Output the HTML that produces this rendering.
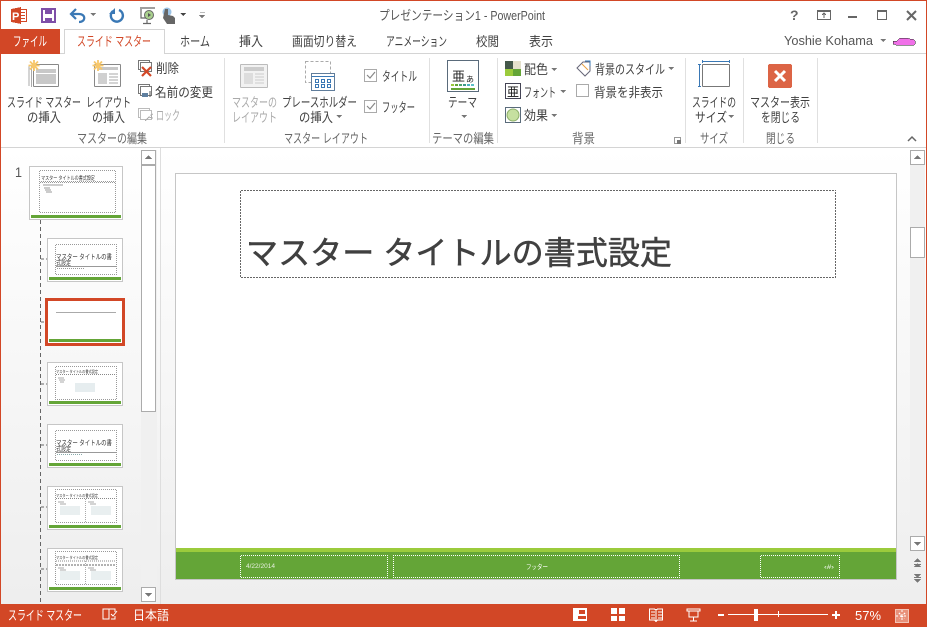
<!DOCTYPE html>
<html lang="ja"><head><meta charset="utf-8"><title>PowerPoint</title>
<style>
html,body{margin:0;padding:0;width:927px;height:627px;overflow:hidden;background:#fff}
svg{display:block}
text{font-family:"Liberation Sans","Noto Sans CJK JP",sans-serif;font-size:13px;fill:#404040;transform:translateY(-1px)}
.w{fill:#fff}.g{fill:#aaa}.lat{font-size:13px;fill:#555;transform:none}
.x{transform:none}
.t{font-size:7px;fill:#333;transform:none}.s{font-size:4px;fill:#555;transform:none}
</style></head><body>
<svg width="927" height="627" viewBox="0 0 927 627" xmlns="http://www.w3.org/2000/svg" shape-rendering="crispEdges">
<defs>
<linearGradient id="bg" x1="0" y1="0" x2="0" y2="1"><stop offset="0" stop-color="#fff"/><stop offset="1" stop-color="#eee"/></linearGradient>
<pattern id="dw" x="0" y="0" width="2" height="2" patternUnits="userSpaceOnUse"><rect x="0" y="0" width="1" height="1" fill="#fff"/><rect x="1" y="1" width="1" height="1" fill="#fff"/></pattern>
<pattern id="dg" x="0" y="0" width="2" height="2" patternUnits="userSpaceOnUse"><rect x="0" y="0" width="1" height="1" fill="#999"/><rect x="1" y="1" width="1" height="1" fill="#999"/></pattern>
<pattern id="dt" x="0" y="0" width="3" height="3" patternUnits="userSpaceOnUse"><rect x="0" y="0" width="2" height="1" fill="#666"/><rect x="1" y="1" width="2" height="1" fill="#666"/><rect x="2" y="2" width="1" height="1" fill="#666"/><rect x="0" y="2" width="1" height="1" fill="#666"/></pattern>
</defs>
<rect width="927" height="627" fill="#fff"/>
<rect x="1" y="148" width="925" height="456" fill="url(#bg)"/>

<!-- tabs -->
<rect x="0" y="53" width="927" height="1" fill="#d4d4d4"/>
<rect x="0" y="29" width="60" height="25" fill="#D24726"/>
<path d="M64.500 54V29.500H164.500V54" fill="#fff" stroke="#d4d4d4"/>
<rect x="65" y="53" width="99" height="1" fill="#fff"/>
<text class="w" x="13" y="47" textLength="34" lengthAdjust="spacingAndGlyphs">ファイル</text>
<text x="77" y="47" textLength="74" lengthAdjust="spacingAndGlyphs" style="fill:#D24726">スライド マスター</text>
<text x="180" y="47" textLength="30" lengthAdjust="spacingAndGlyphs">ホーム</text>
<text x="239" y="47" textLength="24" lengthAdjust="spacingAndGlyphs">挿入</text>
<text x="292" y="47" textLength="65" lengthAdjust="spacingAndGlyphs">画面切り替え</text>
<text x="386" y="47" textLength="61" lengthAdjust="spacingAndGlyphs">アニメーション</text>
<text x="476" y="47" textLength="23" lengthAdjust="spacingAndGlyphs">校閲</text>
<text x="529" y="47" textLength="24" lengthAdjust="spacingAndGlyphs">表示</text>
<text x="379" y="21" textLength="166" lengthAdjust="spacingAndGlyphs" style="fill:#555">プレゼンテーション1 - PowerPoint</text>
<text class="lat" x="784" y="45" textLength="89" lengthAdjust="spacingAndGlyphs">Yoshie Kohama</text>
<path d="M880 39h6l-3 3z" fill="#777"/>
<path d="M893 41h4l3-3h7l3 1h3l2 2v3l-1 1h-18l-1-1h-2z" fill="#f070e8" stroke="#222" stroke-width=".5"/>

<!-- QAT -->
<rect x="19.500" y="9.500" width="7" height="12" fill="#fff" stroke="#D24726"/>
<path d="M11 9l10-2v17l-10-2z" fill="#D24726"/>
<text class="w x" x="12" y="20" style="font-size:11px;font-weight:bold">P</text>
<rect x="21" y="12" width="4" height="1" fill="#D24726"/><rect x="21" y="15" width="4" height="1" fill="#D24726"/><rect x="21" y="18" width="4" height="1" fill="#D24726"/>
<rect x="42" y="9" width="13" height="13" fill="#fff" stroke="#7E4FA8" stroke-width="2"/>
<rect x="45" y="9" width="7" height="5" fill="#7E4FA8"/><rect x="45" y="18" width="7" height="4" fill="#7E4FA8"/>
<g shape-rendering="auto">
<path d="M72 14H79C86 14 86 22 79 22" fill="none" stroke="#3a78b5" stroke-width="2.200"/>
<path d="M76 9l-5 5 5 5" fill="none" stroke="#3a78b5" stroke-width="2.200"/>
<path d="M113 11a6 6 0 1 0 6 -1" fill="none" stroke="#3a78b5" stroke-width="2.400"/>
<path d="M118 8v6h-6z" fill="#3a78b5" transform="translate(-3,0)"/>
<path d="M140 8h15M141 9v9h6M147 20v3M143 23.500h8" fill="none" stroke="#666" stroke-width="1.200"/>
<circle cx="149" cy="15" r="4.500" fill="#a9d08e" stroke="#666"/>
<path d="M148 13l3 2-3 2z" fill="#555"/>
<circle cx="167" cy="12" r="4.500" fill="#9cc3e6"/>
<path d="M165 9h3v6l5 1 2 2v6h-8l-4-6z" fill="#666"/>
</g>
<path d="M90 13h6l-3 3z" fill="#777"/>
<path d="M180 13h6l-3 3z" fill="#444"/>
<path d="M200 12h5M199 15h6l-3 3z" fill="#777" stroke="#777" stroke-width=".5"/>

<!-- window controls -->
<text class="x" x="790" y="20" style="font-size:14px;font-weight:bold;fill:#666">?</text>
<rect x="817.500" y="10.500" width="13" height="9" fill="none" stroke="#666"/><rect x="818" y="11" width="12" height="1" fill="#666"/><path d="M824 18v-5M822 15l2-2 2 2" fill="none" stroke="#666"/>
<rect x="848" y="16" width="9" height="2" fill="#666"/>
<rect x="877.500" y="10.500" width="9" height="9" fill="none" stroke="#666"/><rect x="877" y="10" width="10" height="2" fill="#666"/>
<path d="M907 11l9 9M916 11l-9 9" stroke="#666" stroke-width="2" shape-rendering="auto"/>

<!-- ribbon icons: slide master insert -->
<path d="M29 66v20M31.500 65v22" stroke="#aaa" fill="none"/>
<rect x="33.500" y="64.500" width="25" height="22" rx="1" fill="#fff" stroke="#888"/>
<rect x="36" y="69" width="20" height="4" fill="#c8c8c8"/><rect x="36" y="74" width="20" height="10" fill="#c8c8c8"/>
<g shape-rendering="auto" stroke="#f7c76a" stroke-width="1.800"><path d="M34 60v11M28.500 65.500h11M30 61.500l8 8M38 61.500l-8 8"/></g>
<rect x="94.500" y="64.500" width="26" height="22" rx="1" fill="#fff" stroke="#888"/>
<rect x="98" y="67" width="20" height="3" fill="#c8c8c8"/><rect x="98" y="73" width="9" height="11" fill="#d0d0d0"/><path d="M109 74h9M109 77h9M109 80h9M109 83h9" stroke="#aaa"/>
<g shape-rendering="auto" stroke="#f7c76a" stroke-width="1.800"><path d="M98 60v11M92.500 65.500h11M94 61.500l8 8M102 61.500l-8 8"/></g>
<!-- small -->
<rect x="138.500" y="60.500" width="11" height="9" fill="#fff" stroke="#777"/><rect x="140.500" y="62.500" width="11" height="9" fill="#fff" stroke="#777"/>
<path d="M142 67l9 9M151 67l-9 9" stroke="#D24726" stroke-width="2.200" shape-rendering="auto"/>
<rect x="138.500" y="84.500" width="11" height="9" fill="#fff" stroke="#777"/><rect x="140.500" y="86.500" width="11" height="9" fill="#fff" stroke="#777"/><rect x="142" y="93" width="6" height="4" fill="#5f7f9f"/><path d="M150 91v6" stroke="#555"/>
<rect x="138.500" y="108.500" width="11" height="9" fill="#fff" stroke="#bbb"/><rect x="140.500" y="110.500" width="11" height="9" fill="#fff" stroke="#bbb"/><path d="M145 121l4-4 3 1-1-3 2-1" stroke="#aaa" fill="none"/>
<text x="156" y="74" textLength="23" lengthAdjust="spacingAndGlyphs">削除</text>
<text x="155" y="98" textLength="58" lengthAdjust="spacingAndGlyphs">名前の変更</text>
<text class="g" x="156" y="121" textLength="24" lengthAdjust="spacingAndGlyphs">ロック</text>
<text x="7" y="108" textLength="74" lengthAdjust="spacingAndGlyphs">スライド マスター</text>
<text x="27" y="123" textLength="34" lengthAdjust="spacingAndGlyphs">の挿入</text>
<text x="86" y="108" textLength="45" lengthAdjust="spacingAndGlyphs">レイアウト</text>
<text x="92" y="123" textLength="33" lengthAdjust="spacingAndGlyphs">の挿入</text>
<text style="fill:#666" x="77" y="144" textLength="70" lengthAdjust="spacingAndGlyphs">マスターの編集</text>
<rect x="224" y="58" width="1" height="85" fill="#e0e0e0"/>

<!-- layout group -->
<rect x="240.500" y="64.500" width="27" height="23" rx="1" fill="#f2f2f2" stroke="#bbb"/>
<rect x="244" y="67" width="20" height="4" fill="#ccc"/><rect x="244" y="73" width="9" height="11" fill="#ddd"/><path d="M255 74h9M255 77h9M255 80h9M255 83h9" stroke="#ccc"/>
<text class="g" x="232" y="108" textLength="45" lengthAdjust="spacingAndGlyphs">マスターの</text>
<text class="g" x="232" y="123" textLength="45" lengthAdjust="spacingAndGlyphs">レイアウト</text>
<rect x="305.500" y="61.500" width="25" height="21" fill="none" stroke="#aaa" stroke-dasharray="3 2"/>
<rect x="311.500" y="73.500" width="23" height="17" fill="#fff" stroke="#607d9b"/><rect x="312" y="76" width="22" height="1" fill="#3a78b5"/>
<g fill="none" stroke="#3a78b5"><rect x="315.500" y="79.500" width="3" height="3"/><rect x="321.500" y="79.500" width="3" height="3"/><rect x="327.500" y="79.500" width="3" height="3"/><rect x="315.500" y="84.500" width="3" height="3"/><rect x="321.500" y="84.500" width="3" height="3"/><rect x="327.500" y="84.500" width="3" height="3"/></g>
<text x="282" y="108" textLength="75" lengthAdjust="spacingAndGlyphs">プレースホルダー</text>
<text x="299" y="123" textLength="34" lengthAdjust="spacingAndGlyphs">の挿入</text>
<path d="M336 115h6l-3 3z" fill="#777"/>
<rect x="364.500" y="69.500" width="12" height="12" fill="#fff" stroke="#aaa"/><path d="M367 75l3 3 5-6" fill="none" stroke="#888" stroke-width="1.200" shape-rendering="auto"/>
<rect x="364.500" y="100.500" width="12" height="12" fill="#fff" stroke="#aaa"/><path d="M367 106l3 3 5-6" fill="none" stroke="#888" stroke-width="1.200" shape-rendering="auto"/>
<text x="382" y="82" textLength="35" lengthAdjust="spacingAndGlyphs">タイトル</text>
<text x="382" y="113" textLength="33" lengthAdjust="spacingAndGlyphs">フッター</text>
<text style="fill:#666" x="284" y="144" textLength="84" lengthAdjust="spacingAndGlyphs">マスター レイアウト</text>
<rect x="429" y="58" width="1" height="85" fill="#e0e0e0"/>

<!-- theme -->
<rect x="447.500" y="60.500" width="31" height="31" fill="#fff" stroke="#5a6b7b"/>
<text x="452" y="82" style="font-size:13px;fill:#222">亜</text><text x="466" y="83" style="font-size:8px;fill:#222">あ</text>
<rect x="451" y="84" width="3" height="2" fill="#9bc83c"/><rect x="455" y="84" width="3" height="2" fill="#64a537"/><rect x="459" y="84" width="3" height="2" fill="#4aa36b"/><rect x="463" y="84" width="3" height="2" fill="#3f9a8a"/><rect x="467" y="84" width="3" height="2" fill="#4bb3c4"/><rect x="471" y="84" width="3" height="2" fill="#5bc0c8"/>
<rect x="451" y="88" width="24" height="2" fill="#64a537"/>
<text x="448" y="108" textLength="29" lengthAdjust="spacingAndGlyphs">テーマ</text>
<path d="M461 115h6l-3 3z" fill="#777"/>
<text style="fill:#666" x="432" y="144" textLength="62" lengthAdjust="spacingAndGlyphs">テーマの編集</text>
<rect x="497" y="58" width="1" height="85" fill="#e0e0e0"/>

<!-- background -->
<rect x="505" y="61" width="8" height="8" fill="#44584a"/><rect x="513" y="61" width="8" height="8" fill="#e4e0cc"/><rect x="505" y="69" width="8" height="7" fill="#9bcb3c"/><rect x="513" y="69" width="8" height="7" fill="#64a537"/>
<rect x="505.500" y="83.500" width="15" height="15" fill="#fff" stroke="#445"/>
<text class="x" x="507" y="96" style="font-size:12px;fill:#111">亜</text>
<rect x="505.500" y="107.500" width="15" height="15" fill="#fff" stroke="#5a6b7b"/>
<circle cx="513" cy="115" r="6" fill="#c6e0a0" stroke="#8db06a" shape-rendering="auto"/>
<text x="524" y="75" textLength="24" lengthAdjust="spacingAndGlyphs">配色</text><path d="M551 68h6l-3 3z" fill="#777"/>
<text x="524" y="98" textLength="32" lengthAdjust="spacingAndGlyphs">フォント</text><path d="M560 90h6l-3 3z" fill="#777"/>
<text x="524" y="121" textLength="24" lengthAdjust="spacingAndGlyphs">効果</text><path d="M551 114h6l-3 3z" fill="#777"/>
<g shape-rendering="auto"><path d="M577 68l6-6h7v9l-5 5z" fill="#fff" stroke="#667"/><path d="M582 64l6 6" stroke="#e8a040"/><path d="M585 61h5v5" fill="none" stroke="#3a78b5"/></g>
<text x="595" y="75" textLength="70" lengthAdjust="spacingAndGlyphs">背景のスタイル</text><path d="M668 67h6l-3 3z" fill="#777"/>
<rect x="576.500" y="84.500" width="12" height="12" fill="#fff" stroke="#aaa"/>
<text x="594" y="98" textLength="69" lengthAdjust="spacingAndGlyphs">背景を非表示</text>
<text style="fill:#666" x="572" y="144" textLength="23" lengthAdjust="spacingAndGlyphs">背景</text>
<rect x="674.500" y="137.500" width="6" height="6" fill="none" stroke="#999"/><rect x="677" y="140" width="4" height="4" fill="#777"/>
<rect x="685" y="58" width="1" height="85" fill="#e0e0e0"/>

<!-- size -->
<rect x="702.500" y="64.500" width="27" height="22" rx="1" fill="#fff" stroke="#777"/>
<path d="M702 61.500h28M702.500 60v3M729.500 60v3M699.500 64v23M698 64.500h3M698 86.500h3" stroke="#3a78b5" fill="none"/>
<text x="692" y="108" textLength="44" lengthAdjust="spacingAndGlyphs">スライドの</text>
<text x="695" y="123" textLength="32" lengthAdjust="spacingAndGlyphs">サイズ</text><path d="M728 115h6l-3 3z" fill="#777"/>
<text style="fill:#666" x="700" y="144" textLength="28" lengthAdjust="spacingAndGlyphs">サイズ</text>
<rect x="743" y="58" width="1" height="85" fill="#e0e0e0"/>

<!-- close master -->
<rect x="768" y="64" width="24" height="24" rx="2" fill="#DC6445"/>
<path d="M775 71l10 10M785 71l-10 10" stroke="#fff" stroke-width="3" shape-rendering="auto"/>
<text x="750" y="108" textLength="60" lengthAdjust="spacingAndGlyphs">マスター表示</text>
<text x="761" y="123" textLength="39" lengthAdjust="spacingAndGlyphs">を閉じる</text>
<text style="fill:#666" x="766" y="144" textLength="29" lengthAdjust="spacingAndGlyphs">閉じる</text>
<rect x="817" y="58" width="1" height="85" fill="#e0e0e0"/>
<path d="M908 141l4-4 4 4" fill="none" stroke="#666" stroke-width="1.500" shape-rendering="auto"/>
<rect x="0" y="147" width="927" height="1" fill="#d4d4d4"/>

<!-- left pane -->
<rect x="160" y="148" width="1" height="456" fill="#dedede"/>
<rect x="141" y="150" width="16" height="454" fill="#f0f0f0"/>
<rect x="141.500" y="150.500" width="14" height="14" fill="#fff" stroke="#ababab"/><path d="M145 159h7l-3.500-4z" fill="#777"/>
<rect x="141.500" y="165.500" width="14" height="246" fill="#fff" stroke="#ababab"/>
<rect x="141.500" y="587.500" width="14" height="14" fill="#fff" stroke="#ababab"/><path d="M145 593h7l-3.500 4z" fill="#777"/>
<text class="x" x="15" y="177" style="font-size:14px;fill:#555" textLength="7" lengthAdjust="spacingAndGlyphs">1</text>
<path d="M40.500 220V604" stroke="#666" stroke-dasharray="4 3"/>
<path d="M41 259h6M41 322h4M41 384h6M41 445h6M41 507h6M41 569h6" stroke="#666" stroke-dasharray="3 2"/>

<!-- master thumb -->
<rect x="29.500" y="166.500" width="93" height="53" fill="#fff" stroke="#c6c6c6"/>
<rect x="31" y="215" width="90" height="3" fill="#64a537"/>
<rect x="39.500" y="170.500" width="76" height="11" fill="none" stroke="url(#dg)"/>
<rect x="39.500" y="182.500" width="76" height="30" fill="none" stroke="url(#dg)"/>
<text class="s" x="41" y="180" textLength="54" lengthAdjust="spacingAndGlyphs" style="font-size:5.500px;fill:#333">マスター タイトルの書式設定</text>
<path d="M43 185h20M44 188h6M45 190h6M46 192h6" stroke="#999"/>

<!-- layout 1 -->
<rect x="47.500" y="238.500" width="75" height="43" fill="#fff" stroke="#c6c6c6"/><rect x="49" y="277" width="72" height="3" fill="#64a537"/>
<rect x="55.500" y="244.500" width="61" height="30" fill="none" stroke="url(#dg)"/>
<text class="t" x="56" y="259" textLength="56" lengthAdjust="spacingAndGlyphs">マスター タイトルの書</text><text class="t" x="56" y="265" textLength="15" lengthAdjust="spacingAndGlyphs">式設定</text>
<path d="M56 266.500h60" stroke="#999"/><path d="M57 268.500h28" stroke="#999" stroke-dasharray="1 1"/>
<!-- selected -->
<rect x="46.500" y="299.500" width="77" height="45" fill="#fff" stroke="#D24726" stroke-width="3"/>
<rect x="49" y="339" width="72" height="3" fill="#64a537"/>
<rect x="56" y="312" width="60" height="1" fill="#aaa"/>
<!-- layout 3 -->
<rect x="47.500" y="362.500" width="75" height="43" fill="#fff" stroke="#c6c6c6"/><rect x="49" y="401" width="72" height="3" fill="#64a537"/>
<rect x="55.500" y="366.500" width="61" height="33" fill="none" stroke="url(#dg)"/>
<text class="s" x="56" y="373" textLength="42" lengthAdjust="spacingAndGlyphs" style="fill:#333">マスター タイトルの書式設定</text>
<path d="M56 374.500h60" stroke="#888" stroke-dasharray="1 1"/><path d="M58 378h6M59 380h6M60 382h4" stroke="#aaa"/>
<rect x="75" y="383" width="20" height="9" fill="#e6edef"/>
<!-- layout 4 -->
<rect x="47.500" y="424.500" width="75" height="43" fill="#fff" stroke="#c6c6c6"/><rect x="49" y="463" width="72" height="3" fill="#64a537"/>
<rect x="55.500" y="430.500" width="61" height="30" fill="none" stroke="url(#dg)"/>
<text class="t" x="56" y="445" textLength="56" lengthAdjust="spacingAndGlyphs">マスター タイトルの書</text><text class="t" x="56" y="451" textLength="15" lengthAdjust="spacingAndGlyphs">式設定</text>
<path d="M56 452.500h60" stroke="#999"/><path d="M57 454.500h26" stroke="#8aa" stroke-dasharray="1 1"/>
<!-- layout 5 -->
<rect x="47.500" y="486.500" width="75" height="43" fill="#fff" stroke="#c6c6c6"/><rect x="49" y="525" width="72" height="3" fill="#64a537"/>
<rect x="55.500" y="489.500" width="61" height="33" fill="none" stroke="url(#dg)"/><path d="M85.500 499v24" stroke="#aaa" stroke-dasharray="1 1"/>
<text class="s" x="56" y="497" textLength="42" lengthAdjust="spacingAndGlyphs" style="fill:#333">マスター タイトルの書式設定</text>
<path d="M56 498.500h60" stroke="#888" stroke-dasharray="1 1"/><path d="M58 502h6M60 504h6M88 502h6M90 504h6" stroke="#aaa"/>
<rect x="60" y="506" width="20" height="9" fill="#e9eff0"/><rect x="91" y="506" width="20" height="9" fill="#e9eff0"/>
<!-- layout 6 -->
<rect x="47.500" y="548.500" width="75" height="43" fill="#fff" stroke="#c6c6c6"/><rect x="49" y="587" width="72" height="3" fill="#64a537"/>
<rect x="55.500" y="551.500" width="61" height="33" fill="none" stroke="url(#dg)"/><path d="M85.500 561v24" stroke="#aaa" stroke-dasharray="1 1"/>
<text class="s" x="56" y="559" textLength="42" lengthAdjust="spacingAndGlyphs" style="fill:#333">マスター タイトルの書式設定</text>
<path d="M56 561h60" stroke="#888" stroke-dasharray="1 1"/><path d="M56 565h60" stroke="#666" stroke-dasharray="2 1"/><path d="M58 568h6M60 570h6M88 568h6M90 570h6" stroke="#aaa"/>
<rect x="60" y="571" width="20" height="9" fill="#e9eff0"/><rect x="91" y="571" width="20" height="9" fill="#e9eff0"/>

<!-- main slide -->
<rect x="175.500" y="173.500" width="721" height="406" fill="#fff" stroke="#c6c6c6"/>
<rect x="176" y="548" width="720" height="4" fill="#9BCB3C"/>
<rect x="176" y="552" width="720" height="27" fill="#64A537"/>
<rect x="240.500" y="190.500" width="595" height="87" fill="none" stroke="url(#dt)"/>
<text class="x" x="246" y="264" textLength="426" lengthAdjust="spacingAndGlyphs" style="font-size:32px;fill:#404040;stroke:#404040;stroke-width:.5px">マスター タイトルの書式設定</text>
<g fill="none" stroke="url(#dw)">
<rect x="240.500" y="555.500" width="147" height="22"/><rect x="393.500" y="555.500" width="286" height="22"/><rect x="760.500" y="555.500" width="79" height="22"/>
</g>
<text class="x" x="246" y="568" textLength="29" lengthAdjust="spacingAndGlyphs" style="font-size:6.500px;fill:#e8f0e0">4/22/2014</text>
<text class="w x" x="526" y="569" textLength="22" lengthAdjust="spacingAndGlyphs" style="font-size:6.500px">フッター</text>
<text class="w x" x="824" y="569" textLength="10" lengthAdjust="spacingAndGlyphs" style="font-size:6.500px">‹#›</text>

<!-- right scrollbar -->
<rect x="910" y="150" width="15" height="386" fill="#f0f0f0"/>
<rect x="910.500" y="150.500" width="14" height="14" fill="#fff" stroke="#ababab"/><path d="M914 159h7l-3.500-4z" fill="#777"/>
<rect x="910.500" y="227.500" width="14" height="30" fill="#fff" stroke="#ababab"/>
<rect x="910.500" y="536.500" width="14" height="14" fill="#fff" stroke="#ababab"/><path d="M914 542h7l-3.500 4z" fill="#777"/>
<path d="M914 562h7l-3.500-4zM914 567h7l-3.500-4z" fill="#777"/><rect x="914" y="564" width="7" height="1" fill="#777"/>
<path d="M914 574h7l-3.500 4zM914 579h7l-3.500 4z" fill="#777"/><rect x="914" y="577" width="7" height="1" fill="#777"/>

<!-- status bar -->
<rect x="0" y="604" width="927" height="23" fill="#D24726"/>
<text class="w" x="8" y="621" textLength="74" lengthAdjust="spacingAndGlyphs">スライド マスター</text>
<path d="M103 609h6v10h-6zM109 609h6v3M115 616v3h-4M111 614l2 2 4-5" fill="none" stroke="#fff" shape-rendering="auto"/>
<text class="w" x="133" y="621" textLength="36" lengthAdjust="spacingAndGlyphs">日本語</text>
<rect x="573" y="608" width="14" height="13" fill="#fff"/><rect x="579" y="610" width="6" height="4" fill="#D24726"/><rect x="578" y="616" width="8" height="3" fill="#D24726"/>
<rect x="611" y="608" width="6" height="6" fill="#fff"/><rect x="619" y="608" width="6" height="6" fill="#fff"/><rect x="611" y="616" width="6" height="5" fill="#fff"/><rect x="619" y="616" width="6" height="5" fill="#fff"/>
<path d="M649.500 609h5l1.500 1 1.500-1h5v11h-5l-1.500 1.500-1.500-1.500h-5zM656 610v11M651 612h4M651 615h4M651 618h4M658 612h4M658 615h4M658 618h4" fill="none" stroke="#fff"/>
<path d="M687 609h13v2h-13zM689 611v6h9v-6M693.500 617v4M690 621h7" fill="none" stroke="#fff"/>
<rect x="718" y="614" width="6" height="2" fill="#fff"/>
<rect x="728" y="614" width="100" height="1" fill="#fff"/>
<rect x="754" y="609" width="4" height="12" fill="#fff"/><rect x="778" y="611" width="1" height="6" fill="#fff"/>
<rect x="832" y="614" width="8" height="2" fill="#fff"/><rect x="835" y="611" width="2" height="8" fill="#fff"/>
<text class="w x" x="855" y="620" textLength="26" lengthAdjust="spacingAndGlyphs" style="font-size:13px">57%</text>
<rect x="895.500" y="609.500" width="13" height="13" fill="#e8917a" stroke="#f3c4b6"/>
<path d="M902 610v12M896 616h12M899 613l6 6M905 613l-6 6" stroke="#fff" stroke-dasharray="2 2"/>

<!-- window border -->
<rect x="0" y="0" width="927" height="1" fill="#D24726"/>
<rect x="0" y="0" width="1" height="627" fill="#D24726"/>
<rect x="926" y="0" width="1" height="627" fill="#D24726"/>
</svg>
</body></html>
